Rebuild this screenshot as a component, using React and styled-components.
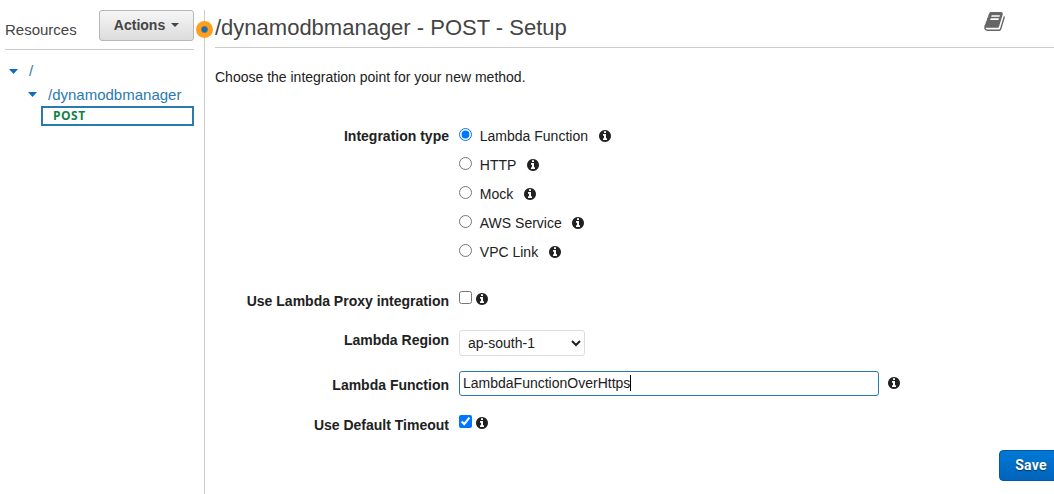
import React from "react";
import styled, { createGlobalStyle } from "styled-components";

const Global = createGlobalStyle`
  * { box-sizing: border-box; }
  body { margin: 0; background: #fff; overflow: hidden; }
  #root { height: 494px; }
`;

const Page = styled.div`
  display: flex;
  width: 1054px;
  height: 494px;
  overflow: hidden;
  padding-top: 10px;
  font: 14px/20px "Liberation Sans", Arial, sans-serif;
  color: #212121;
`;

const Sidebar = styled.aside`
  width: 205px;
  padding-left: 5px;
  border-right: 1px solid #ccc;
  position: relative;
`;

const SidebarHeader = styled.header`
  display: flex;
  justify-content: space-between;
  width: 189px;
  height: 40px;
  border-bottom: 1px solid #ccc;
`;

const SidebarTitle = styled.h2`
  margin: 10px 0 0;
  font-size: 15px;
  line-height: 20px;
  font-weight: 400;
  color: #444;
`;

const ActionsButton = styled.button`
  display: flex;
  align-items: center;
  justify-content: center;
  gap: 6px;
  width: 95px;
  height: 31px;
  padding: 0 0 1px;
  border: 1px solid #b8b8b8;
  border-radius: 3px;
  background: linear-gradient(#f6f6f6, #dcdcdc);
  font: bold 14px/20px "Liberation Sans", Arial, sans-serif;
  color: #444;
`;

const Caret = styled.span`
  border: solid transparent;
  border-width: ${(p) => p.$half}px ${(p) => p.$half}px 0;
  border-top-color: ${(p) => p.$color};
`;

const TreeCaret = styled.svg`
  width: 9px;
  height: 5px;
  fill: #0f6cbf;
`;

const ResizeHandle = styled.span`
  position: absolute;
  top: 11px;
  right: -9px;
  width: 17px;
  height: 17px;
  border-radius: 50%;
  background: radial-gradient(circle, #146eb4 2.2px, #8a8057 3.2px, #ff9d1e 4px);
`;

const Tree = styled.nav`
  width: 189px;
  padding-top: 9px;
`;

const TreeItem = styled.a`
  display: flex;
  align-items: center;
  height: ${(p) => p.$height}px;
  padding-left: ${(p) => p.$indent}px;
  gap: ${(p) => p.$gap}px;
  font-size: 15px;
  color: #2a7ab0;
`;

const Method = styled.div`
  margin-left: 36px;
  width: 153px;
  height: 20px;
  padding-left: 10px;
  border: 2px solid #2a7ab0;
  font: bold 12px/16px "Open Sans", sans-serif;
  letter-spacing: 0.5px;
  color: #118049;
`;

const Main = styled.main`
  width: 849px;
  padding-left: 10px;
`;

const MainHeader = styled.header`
  display: flex;
  justify-content: space-between;
  height: 38px;
  padding-right: 49px;
  border-bottom: 1px solid #ccc;
`;

const Title = styled.h1`
  margin: 5px 0 0;
  font-size: 22px;
  line-height: 26px;
  font-weight: 400;
  color: #444;
`;

const Intro = styled.p`
  margin: 19px 0 0;
`;

const Form = styled.form`
  margin-top: 39px;
`;

const Row = styled.div`
  display: flex;
  height: ${(p) => p.$height}px;
`;

const Label = styled.label`
  width: 234px;
  margin-right: 10px;
  padding-top: ${(p) => p.$top || 0}px;
  text-align: right;
  font-weight: 700;
  white-space: nowrap;
`;

const Options = styled.div`
  display: flex;
  flex-direction: column;
`;

const Option = styled.label`
  display: flex;
  height: 29px;
`;

const OptionText = styled.span`
  margin: 0 10.6px 0 7.8px;
`;

const Choice = styled.input`
  width: 13px;
  height: 13px;
  margin: ${(p) => p.$top ?? 2}px 0 0;
  accent-color: #0075ff;
`;

const InfoSvg = styled.svg`
  display: block;
  width: 12px;
  height: 12px;
  margin: ${(p) => p.$top}px 0 0 ${(p) => p.$left || 0}px;
  fill: #212121;
`;

const BookSvg = styled.svg`
  display: block;
  width: 21px;
  height: 19px;
  margin-top: 2px;
  fill: #666;
`;

const Region = styled.select`
  width: 126px;
  height: 26px;
  padding: 0 0 0 4px;
  border: 1px solid #ddd;
  border-radius: 3px;
  background: #fff;
  font: 14px "Liberation Sans", Arial, sans-serif;
  color: #212121;
`;

const Field = styled.div`
  display: flex;
  align-items: center;
  width: 420px;
  height: 25px;
  padding: 0 0 1px 3px;
  border: 1px solid #2a7ab0;
  border-radius: 3px;
`;

const TextCursor = styled.span`
  width: 1px;
  height: 16px;
  background: #000;
`;

const Footer = styled.footer`
  display: flex;
  justify-content: flex-end;
`;

const SaveButton = styled.button`
  flex: none;
  width: 65px;
  height: 31px;
  margin-right: -10px;
  padding: 0 1px 1px 0;
  border: 1px solid #005a9f;
  border-radius: 4px;
  background: linear-gradient(#0078d7, #0064bb);
  font: bold 14px/20px Roboto, sans-serif;
  letter-spacing: 0.25px;
  color: #fff;
  text-shadow: 0 1px 1px #003560;
`;

const Info = ({ top = 4, left }) => (
  <InfoSvg viewBox="0 128 1536 1536" $top={top} $left={left}>
    <path d="M1024 1376v-160q0-14-9-23t-23-9h-96v-512q0-14-9-23t-23-9h-320q-14 0-23 9t-9 23v160q0 14 9 23t23 9h96v320h-96q-14 0-23 9t-9 23v160q0 14 9 23t23 9h448q14 0 23-9t9-23zm-128-896v-160q0-14-9-23t-23-9h-192q-14 0-23 9t-9 23v160q0 14 9 23t23 9h192q14 0 23-9t9-23zm640 416q0 209-103 385.5t-279.5 279.5-385.5 103-385.5-103-279.5-279.5-103-385.5 103-385.5 279.5-279.5 385.5-103 385.5 103 279.5 279.5 103 385.5z" />
  </InfoSvg>
);

const Book = () => (
  <BookSvg viewBox="0 128 1664 1536">
    <path d="M1639 478q40 57 18 129l-275 906q-19 64-76.5 107.5t-122.5 43.5h-923q-77 0-148.5-53.5t-99.5-131.5q-24-67-2-127 0-4 3-27t4-37q1-8-3-21.5t-3-19.5q2-11 8-21t16.5-23.5 16.5-23.5q23-38 45-91.5t30-91.5q3-10 .5-30t-.5-28q3-11 17-28t17-23q21-36 42-92t25-90q1-9-2.5-32t.5-28q4-13 22-30.5t22-22.5q19-26 42.5-84.5t27.5-96.5q1-8-3-25.5t-2-26.5q2-8 9-18t18-23 17-21q8-12 16.5-30.5t15-35 16-36 19.5-32 26.5-23.5 36-11.5 47.5 5.5l-1 3q38-9 51-9h761q74 0 114 56t18 130l-274 906q-36 119-71.5 153.5t-128.5 34.5h-869q-27 0-38 15-11 16-1 43 24 70 144 70h923q29 0 56-15.5t35-41.5l300-987q7-22 5-57 38 15 59 43zm-1064 2q-4 13 2 22.5t20 9.5h608q13 0 25.5-9.5t16.5-22.5l21-64q4-13-2-22.5t-20-9.5h-608q-13 0-25.5 9.5t-16.5 22.5zm-83 256q-4 13 2 22.5t20 9.5h608q13 0 25.5-9.5t16.5-22.5l21-64q4-13-2-22.5t-20-9.5h-608q-13 0-25.5 9.5t-16.5 22.5z" />
  </BookSvg>
);

const OpenCaret = () => (
  <TreeCaret viewBox="0 0 9 5">
    <path d="M0 0h9L4.5 5z" />
  </TreeCaret>
);

const types = ["Lambda Function", "HTTP", "Mock", "AWS Service", "VPC Link"];

export default function App() {
  return (
    <Page>
      <Global />
      <Sidebar>
        <SidebarHeader>
          <SidebarTitle>Resources</SidebarTitle>
          <ActionsButton>
            Actions <Caret $half={4} $color="#444" />
          </ActionsButton>
        </SidebarHeader>
        <Tree>
          <TreeItem $height={24} $indent={4} $gap={11}>
            <OpenCaret />/
          </TreeItem>
          <TreeItem $height={23} $indent={23} $gap={11}>
            <OpenCaret />/dynamodbmanager
          </TreeItem>
          <Method>POST</Method>
        </Tree>
        <ResizeHandle />
      </Sidebar>
      <Main>
        <MainHeader>
          <Title>/dynamodbmanager - POST - Setup</Title>
          <Book />
        </MainHeader>
        <Intro>Choose the integration point for your new method.</Intro>
        <Form>
          <Row $height={165}>
            <Label>Integration type</Label>
            <Options>
              {types.map((type, i) => (
                <Option key={type}>
                  <Choice type="radio" name="type" defaultChecked={i === 0} />
                  <OptionText>{type}</OptionText>
                  <Info />
                </Option>
              ))}
            </Options>
          </Row>
          <Row $height={39}>
            <Label>Use Lambda Proxy integration</Label>
            <Choice type="checkbox" $top={0} />
            <Info top={2} left={4} />
          </Row>
          <Row $height={41}>
            <Label>Lambda Region</Label>
            <Region>
              <option>ap-south-1</option>
            </Region>
          </Row>
          <Row $height={43}>
            <Label $top={4}>Lambda Function</Label>
            <Field>
              LambdaFunctionOverHttps
              <TextCursor />
            </Field>
            <Info top={6} left={9} />
          </Row>
          <Row $height={36}>
            <Label $top={1}>Use Default Timeout</Label>
            <Choice type="checkbox" defaultChecked $top={1} />
            <Info top={3} left={4} />
          </Row>
        </Form>
        <Footer>
          <SaveButton>Save</SaveButton>
        </Footer>
      </Main>
    </Page>
  );
}
